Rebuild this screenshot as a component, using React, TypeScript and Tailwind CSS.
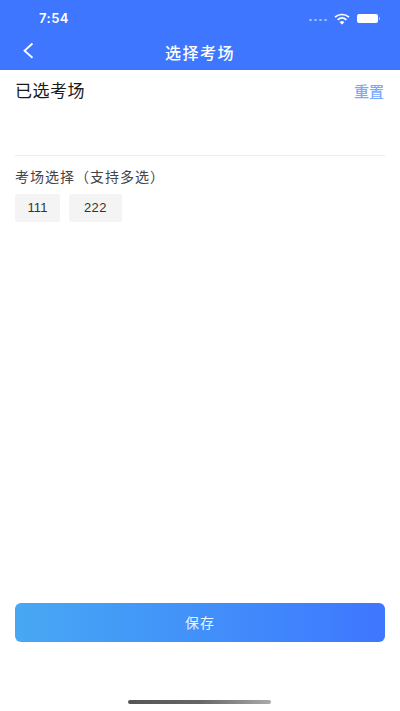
const cjk = "font-['Noto_Sans_CJK_SC','Noto_Sans',sans-serif]";

function StatusBar() {
  return (
    <div className="flex h-[36px] items-center justify-between pl-[39px] pr-[20px] pt-[1px]">
      <span className="font-['Inter',sans-serif] text-[13px] font-semibold tracking-[0.5px] text-white">7:54</span>
      <div className="flex items-center">
        <div className="mr-[7px] flex gap-[2px] pt-[3px]">
          {[0, 1, 2, 3].map((i) => (
            <span key={i} className="h-[1.5px] w-[3px] rounded-full bg-white/50" />
          ))}
        </div>
        <svg width="16" height="12" viewBox="0 0 16 12" fill="none" className="mr-[7px]">
          <path d="M1 4.2C5 .6 11 .6 15 4.2" stroke="white" strokeWidth="1.7" />
          <path d="M3.6 6.8c2.6-2.2 6.2-2.2 8.8 0" stroke="white" strokeWidth="1.7" />
          <path d="M6 9.2c1.2-.9 2.8-.9 4 0L8 11.2z" fill="white" stroke="white" strokeWidth="0.8" />
        </svg>
        <div className="h-[9px] w-[21px] rounded-[2px] bg-white" />
        <div className="ml-[1px] h-[3px] w-[1.5px] bg-white/50" />
      </div>
    </div>
  );
}

export default function App() {
  return (
    <div className={`flex h-[711px] w-[400px] flex-col bg-white ${cjk}`}>
      <header className="h-[70px] bg-[#3f76ff]">
        <StatusBar />
        <div className="relative flex h-[32px] items-center justify-center">
          <svg width="12" height="18" viewBox="0 0 12 18" fill="none" className="absolute left-[22px] top-[6px]">
            <path d="M10.5 1.5 2.5 8.8l8 7" stroke="white" strokeWidth="1.8" />
          </svg>
          <span className="text-[16px] font-medium tracking-[1.5px] text-white">选择考场</span>
        </div>
      </header>

      <main className="flex flex-1 flex-col px-[15px]">
        <div className="flex h-[86px] justify-between border-b border-[#ececec] pt-[8px]">
          <span className="text-[17px] font-normal leading-[24px] tracking-[0.5px] text-[#1a1a1a]">已选考场</span>
          <span className="pr-[1px] text-[15px] font-medium leading-[26px] text-[#7ba8ff]">重置</span>
        </div>
        <p className="mt-[10px] text-[14px] leading-[20px] tracking-[1px] text-[#444444]">考场选择（支持多选）</p>
        <div className="mt-[8px] flex gap-[9px]">
          <span className="flex h-[28px] w-[45px] items-center justify-center rounded-[2px] bg-[#f4f4f4] font-['Liberation_Sans',sans-serif] text-[13px] text-[#333333]">111</span>
          <span className="flex h-[28px] w-[53px] items-center justify-center rounded-[2px] bg-[#f4f4f4] font-['Liberation_Sans',sans-serif] text-[13px] tracking-[0.5px] text-[#333333]">222</span>
        </div>
        <div className="flex-1" />
        <button
          type="button"
          className="h-[39px] w-full rounded-[6px] bg-gradient-to-r from-[#48a8f3] to-[#3f76ff] text-[14px] tracking-[1px] text-white/90"
        >
          保存
        </button>
      </main>

      <div className="flex h-[69px] items-end justify-center pb-[7px]">
        <div className="ml-[-1px] h-[4px] w-[143px] rounded-full bg-gradient-to-r from-[#555555] via-[#666666] to-[#aaaaaa]" />
      </div>
    </div>
  );
}
